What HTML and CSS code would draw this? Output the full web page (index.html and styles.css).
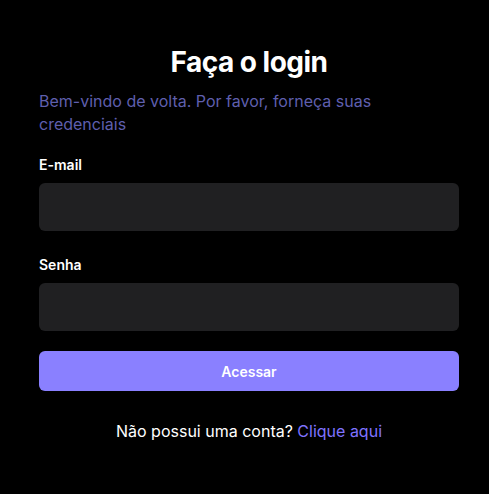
FILE: index.html
```html
<!DOCTYPE html>
<html lang="pt-BR">
<head>
<meta charset="utf-8">
<title>Login</title>
<link rel="stylesheet" href="styles.css">
</head>
<body>
<main class="login">
  <h1 class="login__title">Faça o login</h1>
  <p class="login__subtitle">Bem-vindo de volta. Por favor, forneça suas credenciais</p>
  <form class="login__form">
    <label class="field">
      <span class="field__label">E-mail</span>
      <input class="field__input" type="email">
    </label>
    <label class="field">
      <span class="field__label">Senha</span>
      <input class="field__input" type="password">
    </label>
    <button class="login__button" type="button">Acessar</button>
  </form>
  <p class="login__footer">Não possui uma conta? <a class="login__link" href="#">Clique aqui</a></p>
</main>
</body>
</html>
```

FILE: styles.css
```css
* { box-sizing: border-box; }
html, body {
  margin: 0;
  background: #000;
  color: #fff;
  font-family: Inter, "Noto Sans", sans-serif;
}
.login {
  width: 420px;
  margin-left: 39px;
  padding-top: 44px;
}
.login__title {
  margin: 0;
  text-align: center;
  font-size: 28px;
  font-weight: 700;
  line-height: 36px;
  letter-spacing: -0.5px;
}
.login__subtitle {
  margin: 10px 0 0;
  font-size: 16px;
  line-height: 23px;
  color: #5f5fae;
}
.login__form {
  display: flex;
  flex-direction: column;
  margin-top: 20px;
}
.field {
  display: flex;
  flex-direction: column;
  gap: 9px;
  margin-bottom: 25px;
}
.field:last-of-type {
  margin-bottom: 20px;
}
.field__label {
  font-size: 14px;
  font-weight: 600;
  line-height: 18px;
}
.field__input {
  height: 48px;
  border: 0;
  border-radius: 6px;
  background: #202022;
  color: #fff;
  font: inherit;
  padding: 0 12px;
  outline: none;
}
.login__button {
  height: 40px;
  border: 0;
  border-radius: 6px;
  background: #8a80ff;
  color: #fff;
  font-family: inherit;
  font-size: 14px;
  font-weight: 600;
}
.login__footer {
  margin: 29px 0 0;
  text-align: center;
  font-size: 16px;
  line-height: 22px;
}
.login__link {
  color: #7f72ff;
  text-decoration: none;
}
```
